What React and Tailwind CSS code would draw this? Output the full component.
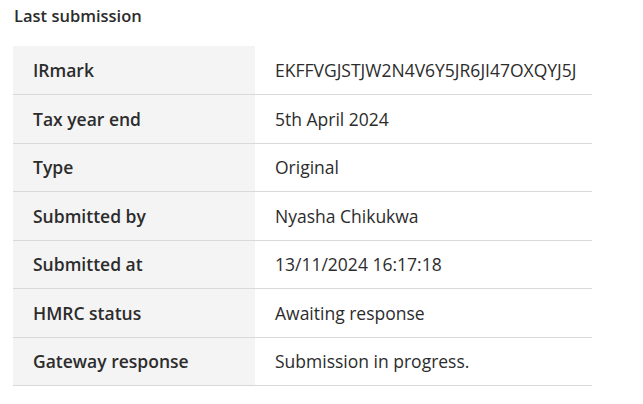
import React from "react";

const rows = [
  ["IRmark", "EKFFVGJSTJW2N4V6Y5JR6JI47OXQYJ5J"],
  ["Tax year end", "5th April 2024"],
  ["Type", "Original"],
  ["Submitted by", "Nyasha Chikukwa"],
  ["Submitted at", "13/11/2024 16:17:18"],
  ["HMRC status", "Awaiting response"],
  ["Gateway response", "Submission in progress."],
];

const App = () => {
  return (
    <div className="min-h-screen bg-white text-[#2c2c2c] font-['Open_Sans','Noto_Sans',sans-serif]">
      <h3 className="px-[14px] pt-[4px] text-[16.5px] leading-[24px] font-semibold">
        Last submission
      </h3>
      <table className="ml-[13px] mt-[18px] w-[579px] border-collapse text-[17px]">
        <tbody>
          {rows.map(([label, value]) => (
            <tr key={label} className="border-b border-[#d9d9d9]">
              <th className="w-[242px] h-[48.5px] bg-[#f4f4f4] pl-5 text-left font-semibold text-[17.5px]">
                {label}
              </th>
              <td className="h-[48.5px] pl-5 font-normal text-[17.5px]">{value}</td>
            </tr>
          ))}
        </tbody>
      </table>
    </div>
  );
};

export default App;
